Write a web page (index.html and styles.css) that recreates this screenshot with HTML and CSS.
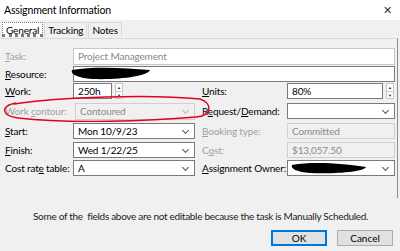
FILE: index.html
```html
<!DOCTYPE html>
<html lang="en">
<head>
  <meta charset="UTF-8">
  <title>Assignment Information</title>
  <link rel="stylesheet" href="styles.css">
</head>
<body>

  <div class="window">
    <div class="titlebar">
      <span class="title">Assignment Information</span>
      <span class="close">&#x2715;</span>
    </div>

    <div class="tabs">
      <div class="tab active">General</div>
      <div class="tab">Tracking</div>
      <div class="tab">Notes</div>
    </div>

    <div class="panel">
      <div class="form">
        <!-- row 1 -->
        <label class="lbl off"><u>T</u>ask:</label>
        <div class="box plain wide">Project Management</div>

        <!-- row 2 -->
        <label class="lbl"><u>R</u>esource:</label>
        <div class="box wide dark"></div>

        <!-- row 3 -->
        <label class="lbl"><u>W</u>ork:</label>
        <div class="spinrow">
          <div class="box dark work">250h</div>
          <div class="spin"><span>&#9650;</span><span>&#9660;</span></div>
        </div>
        <div></div>
        <label class="lbl"><u>U</u>nits:</label>
        <div class="spinrow">
          <div class="box dark units">80%</div>
          <div class="spin"><span>&#9650;</span><span>&#9660;</span></div>
        </div>

        <!-- row 4 -->
        <label class="lbl off">Work <u>c</u>ontour:</label>
        <div class="box combo disabled contour">Contoured<span class="arrow"></span></div>
        <div></div>
        <label class="lbl">R<u>e</u>quest/<u>D</u>emand:</label>
        <div class="box combo dark"><span class="arrow"></span></div>

        <!-- row 5 -->
        <label class="lbl"><u>S</u>tart:</label>
        <div class="box combo dark">Mon 10/9/23<span class="arrow"></span></div>
        <div></div>
        <label class="lbl off"><u>B</u>ooking type:</label>
        <div class="box disabled">Committed</div>

        <!-- row 6 -->
        <label class="lbl"><u>F</u>inish:</label>
        <div class="box combo dark">Wed 1/22/25<span class="arrow"></span></div>
        <div></div>
        <label class="lbl off">C<u>o</u>st:</label>
        <div class="box disabled">$13,057.50</div>

        <!-- row 7 -->
        <label class="lbl">Cost rat<u>e</u> table:</label>
        <div class="box combo dark">A<span class="arrow"></span></div>
        <div></div>
        <label class="lbl"><u>A</u>ssignment Owner:</label>
        <div class="box combo dark"><span class="arrow"></span></div>
      </div>
    </div>

    <p class="note">Some of the&nbsp; fields above are not editable because the task is Manually Scheduled.</p>

    <div class="buttons">
      <button class="btn default">OK</button>
      <button class="btn">Cancel</button>
    </div>

    <!-- markup drawn over the screenshot -->
    <svg class="marks" width="400" height="251" viewBox="0 0 400 251">
      <path d="M14 104 C60 97, 150 94, 200 99 C213 103, 212 116, 196 117 C150 121, 70 124, 18 118 C2 116, -1 106, 16 103"
            fill="none" stroke="#e3001b" stroke-width="1.4"/>
      <path d="M72 70 C95 66, 125 68, 150 70 C148 76, 120 80, 92 79 C80 78, 70 75, 72 70 Z" fill="#000"/>
      <path d="M292 165 C315 161, 345 164, 366 167 C364 172, 335 174, 310 173 C298 172, 290 169, 292 165 Z" fill="#000"/>
    </svg>
  </div>

</body>
</html>
```

FILE: styles.css
```css
* {
  box-sizing: border-box;
}
body {
  margin: 0;
  font-family: 'Lato', 'Noto Sans', sans-serif;
  font-size: 10px;
  letter-spacing: -0.15px;
  color: #000;
  background: #f0f0f0;
}
.window {
  position: relative;
  width: 400px;
  height: 251px;
  overflow: hidden;
}
.titlebar {
  background: #fff;
  height: 20px;
  display: flex;
  justify-content: space-between;
  align-items: center;
  padding: 0 8px 0 4px;
}
.title {
  font-size: 10.5px;
}
.close {
  font-size: 11px;
  color: #333;
}

.tabs {
  display: flex;
  padding: 2px 0 0 2px;
  height: 18px;
}
.tab {
  padding: 0 3px;
  height: 15px;
  line-height: 14px;
  border: 1px solid #d9d9d9;
  border-bottom: none;
  margin-right: 1px;
  background: #f0f0f0;
}
.tab.active {
  background: #fff;
  border-color: #7a7a7a;
  border-style: dotted;
}

.panel {
  border-top: 1px solid #d9d9d9;
  border-right: 1px solid #8c8c8c;
  margin-right: 2px;
  height: 160px;
  padding: 9px 0 0 5px;
}
.form {
  display: grid;
  grid-template-columns: 68px 122px 7px 85px 108px;
  grid-template-rows: 18px 17px 20px 20px 19px 18px 18px;
  align-items: start;
}
.lbl {
  line-height: 17px;
  white-space: nowrap;
}
.lbl.off {
  color: #a0a0a0;
}
.box {
  position: relative;
  height: 17px;
  line-height: 15px;
  padding: 0 4px;
  border: 1px solid #c8c8c8;
  background: #fff;
  white-space: nowrap;
}
.box.wide {
  grid-column: 2 / 6;
}
.box.plain {
  color: #8a8a8a;
}
.box.dark {
  border-color: #7a7a7a;
  height: 16px;
  line-height: 14px;
}
.box.disabled {
  background: #f0f0f0;
  color: #8a8a8a;
  border-color: #cfcfcf;
  height: 16px;
  line-height: 14px;
}
.box.contour {
  height: 17px;
  line-height: 15px;
  margin-left: 2px;
}
.arrow {
  position: absolute;
  right: 6px;
  top: 4px;
  width: 5px;
  height: 5px;
  border-right: 1px solid #555;
  border-bottom: 1px solid #555;
  transform: rotate(45deg);
}
.disabled .arrow {
  border-color: #bbb;
}
.spinrow {
  display: flex;
  gap: 3px;
}
.work {
  width: 39px;
}
.units {
  width: 96px;
}
.spin {
  display: flex;
  flex-direction: column;
  width: 8px;
  height: 16px;
  border: 1px solid #c8c8c8;
  background: #fff;
}
.spin span {
  flex: 1;
  font-size: 4px;
  line-height: 7px;
  text-align: center;
  color: #222;
}
.spin span + span {
  border-top: 1px solid #c8c8c8;
}

.note {
  margin: 0;
  padding: 10px 0 0 33px;
  line-height: 16px;
  color: #222;
  white-space: nowrap;
  letter-spacing: -0.3px;
}
.buttons {
  display: flex;
  justify-content: flex-end;
  gap: 10px;
  padding: 6px 7px 0 0;
}
.btn {
  width: 56px;
  height: 16px;
  font-family: inherit;
  font-size: 10px;
  line-height: 12px;
  padding: 0;
  background: #e1e1e1;
  border: 1px solid #adadad;
  color: #000;
}
.btn.default {
  border: 2px solid #0078d7;
}

.marks {
  position: absolute;
  left: 0;
  top: 0;
  pointer-events: none;
}
```
